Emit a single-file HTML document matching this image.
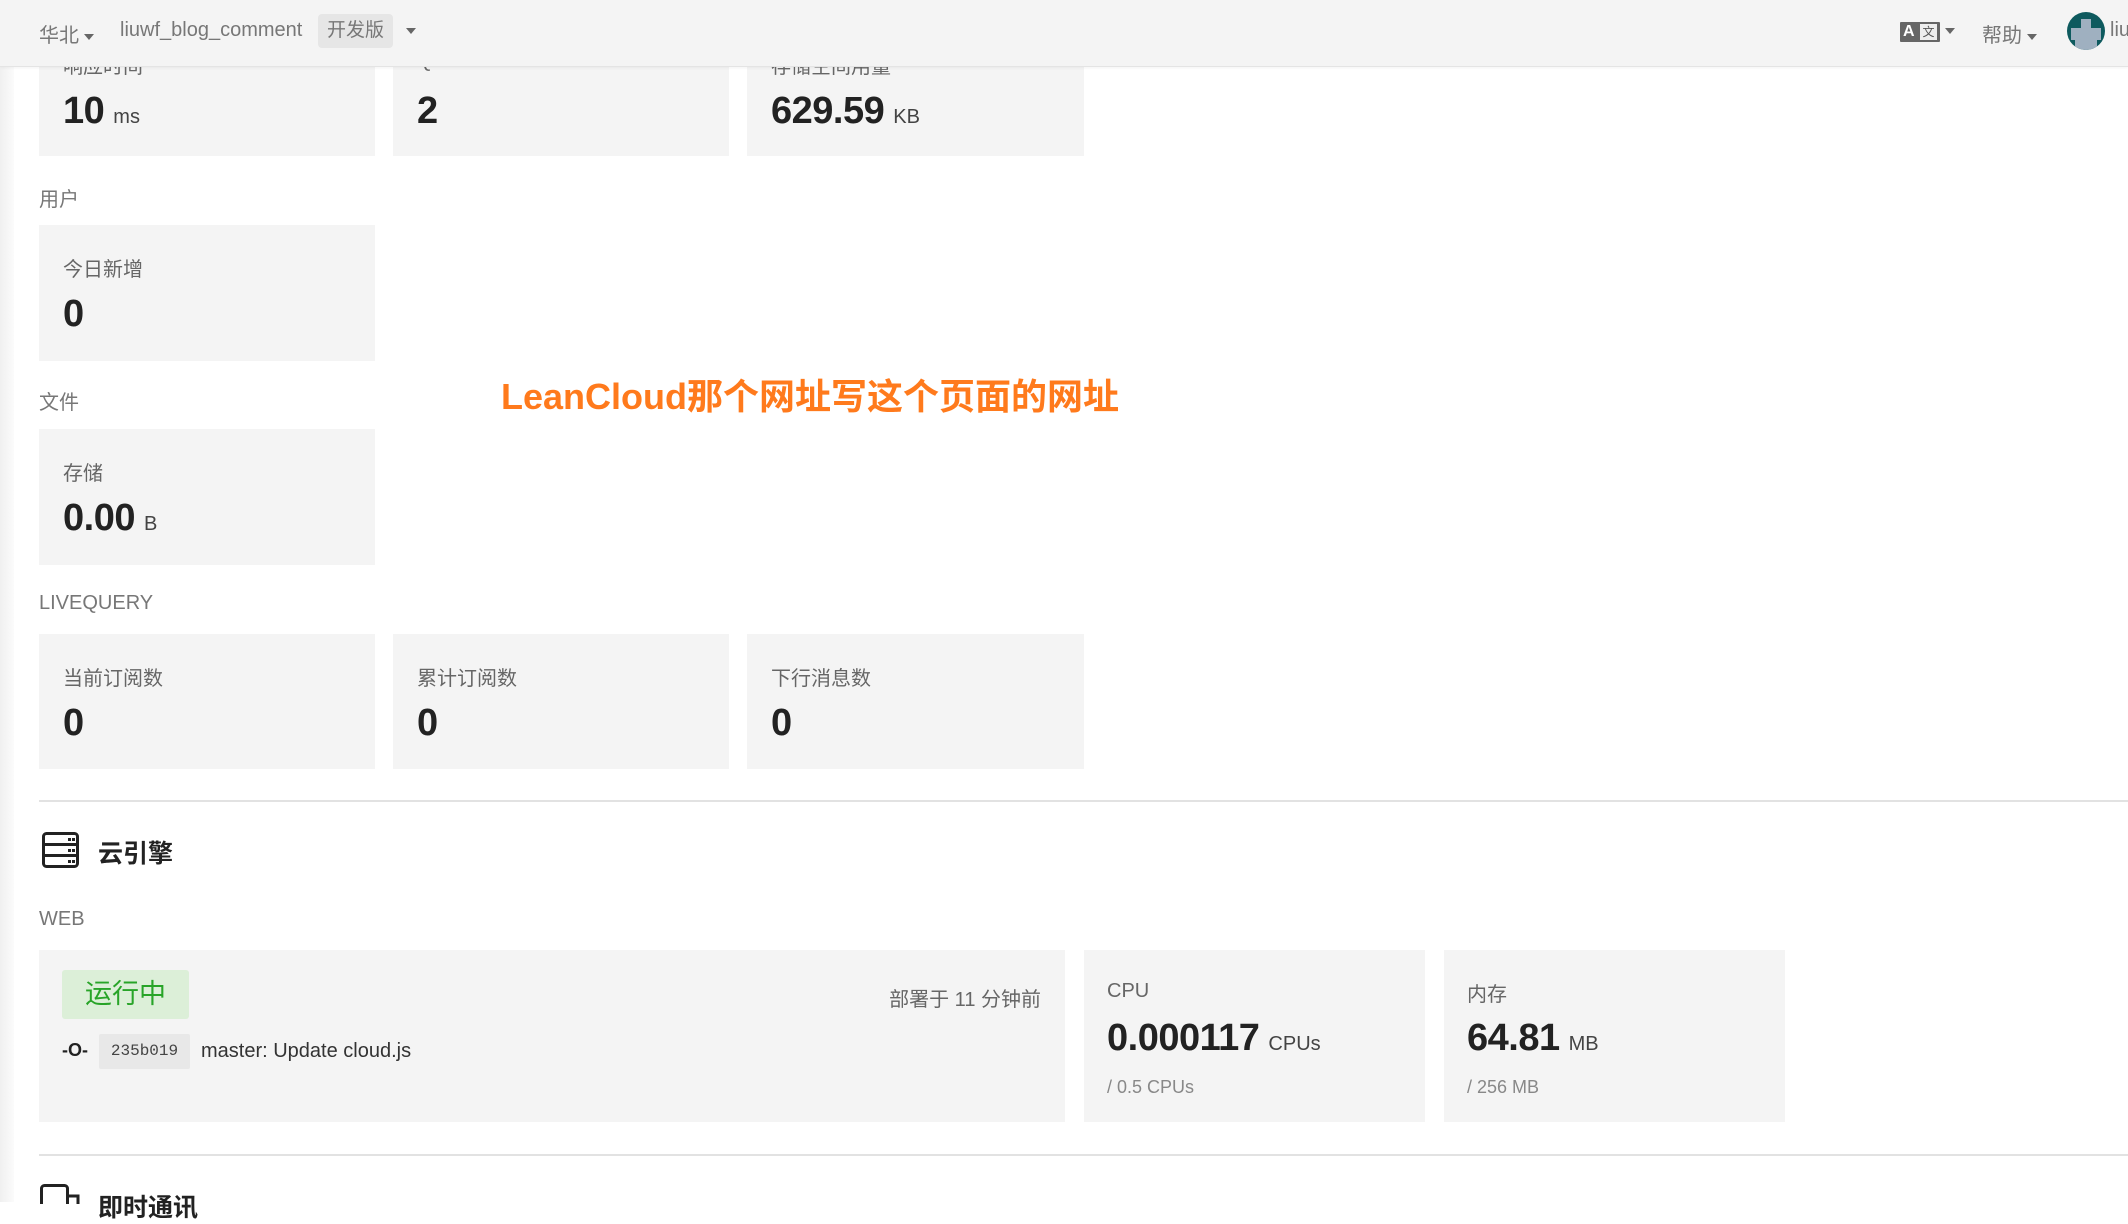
<!DOCTYPE html>
<html><head><meta charset="utf-8"><style>
*{margin:0;padding:0;box-sizing:border-box}
body{width:2128px;height:1202px;overflow:hidden;background:#fff;font-family:"Liberation Sans","Noto Sans CJK SC",sans-serif;color:#333;position:relative}
.a{position:absolute;white-space:nowrap}
.card{position:absolute;background:#f4f4f4}
.lbl{font-size:20px;color:#666}
.val{font-size:38px;font-weight:bold;color:#222;letter-spacing:-0.5px}
.unit{font-size:20px;font-weight:normal;color:#444;margin-left:9px;letter-spacing:0}
.sec{font-size:20px;color:#777}
.hr{position:absolute;left:39px;right:0;height:2px;background:#e2e2e2}
.tri{display:inline-block;width:0;height:0;border-left:5px solid transparent;border-right:5px solid transparent;border-top:6px solid #666;vertical-align:middle;margin-left:5px}
</style></head><body>
<div class="a" style="left:0;top:0;width:14px;height:1202px;background:linear-gradient(90deg,#f0f0f0,#fbfbfb)"></div>

<div class="card" style="left:39px;top:40px;width:336px;height:116px"><div class="a lbl" style="left:24px;top:10px">响应时间</div><div class="a val" style="left:24px;top:50px">10<span class="unit">ms</span></div></div>
<div class="card" style="left:393px;top:40px;width:336px;height:116px"><div class="a lbl" style="left:24px;top:10px">QPS</div><div class="a val" style="left:24px;top:50px">2</div></div>
<div class="card" style="left:747px;top:40px;width:337px;height:116px"><div class="a lbl" style="left:24px;top:10px">存储空间用量</div><div class="a val" style="left:24px;top:50px">629.59<span class="unit">KB</span></div></div>

<div class="a" style="left:0;top:0;width:2128px;height:67px;background:#f4f4f4;border-bottom:1px solid #e4e4e4;box-shadow:0 1px 3px rgba(0,0,0,.05)"></div>
<div class="a" style="left:39px;top:19px;font-size:20px;color:#777">华北<span class="tri"></span></div>
<div class="a" style="left:120px;top:19px;font-size:20px;color:#777">liuwf_blog_comment</div>
<div class="a" style="left:318px;top:14px;width:75px;height:34px;background:#e6e6e6;border-radius:4px;font-size:19px;color:#777;text-align:center;line-height:34px">开发版</div>
<div class="a" style="left:401px;top:22px"><span class="tri"></span></div>
<div class="a" style="left:1900px;top:22px;width:40px;height:20px;background:#666;border-radius:1px"><span class="a" style="left:3px;top:0;font-size:16px;font-weight:bold;color:#fff;line-height:20px">A</span><span class="a" style="left:20px;top:2px;width:17px;height:16px;background:#eee;font-size:12px;color:#555;text-align:center;line-height:16px">文</span></div>
<div class="a" style="left:1940px;top:22px"><span class="tri"></span></div>
<div class="a" style="left:1982px;top:19px;font-size:20px;color:#777">帮助<span class="tri"></span></div>
<div class="a" style="left:2067px;top:12px;width:38px;height:38px;border-radius:50%;background:#0e5a5e;overflow:hidden"><div class="a" style="left:4px;top:16px;width:30px;height:12px;background:#9fb0c0"></div><div class="a" style="left:14px;top:7px;width:10px;height:9px;background:#9fb0c0"></div><div class="a" style="left:8px;top:28px;width:22px;height:10px;background:#9fb0c0"></div></div>
<div class="a" style="left:2110px;top:19px;font-size:20px;color:#777">liu</div>

<div class="a sec" style="left:39px;top:183px">用户</div>
<div class="card" style="left:39px;top:225px;width:336px;height:136px"><div class="a lbl" style="left:24px;top:28px">今日新增</div><div class="a val" style="left:24px;top:68px">0</div></div>
<div class="a sec" style="left:39px;top:386px">文件</div>
<div class="card" style="left:39px;top:429px;width:336px;height:136px"><div class="a lbl" style="left:24px;top:28px">存储</div><div class="a val" style="left:24px;top:68px">0.00<span class="unit">B</span></div></div>

<div class="a" style="left:501px;top:368px;font-size:36px;font-weight:bold;color:#ff7a1c">LeanCloud那个网址写这个页面的网址</div>

<div class="a sec" style="left:39px;top:592px">LIVEQUERY</div>
<div class="card" style="left:39px;top:634px;width:336px;height:135px"><div class="a lbl" style="left:24px;top:28px">当前订阅数</div><div class="a val" style="left:24px;top:68px">0</div></div>
<div class="card" style="left:393px;top:634px;width:336px;height:135px"><div class="a lbl" style="left:24px;top:28px">累计订阅数</div><div class="a val" style="left:24px;top:68px">0</div></div>
<div class="card" style="left:747px;top:634px;width:337px;height:135px"><div class="a lbl" style="left:24px;top:28px">下行消息数</div><div class="a val" style="left:24px;top:68px">0</div></div>

<div class="hr" style="top:800px"></div>
<svg class="a" style="left:42px;top:832px" width="37" height="36" viewBox="0 0 37 36"><rect x="1.5" y="1.5" width="34" height="33" rx="3" fill="none" stroke="#222" stroke-width="3"/><line x1="1" y1="12.5" x2="36" y2="12.5" stroke="#222" stroke-width="3"/><line x1="1" y1="23.5" x2="36" y2="23.5" stroke="#222" stroke-width="3"/><g fill="#222"><rect x="26" y="6" width="3" height="3"/><rect x="30" y="6" width="3" height="3"/><rect x="26" y="17" width="3" height="3"/><rect x="30" y="17" width="3" height="3"/><rect x="26" y="28" width="3" height="3"/><rect x="30" y="28" width="3" height="3"/></g></svg>
<div class="a" style="left:98px;top:834px;font-size:25px;font-weight:bold;color:#222">云引擎</div>

<div class="a sec" style="left:39px;top:908px">WEB</div>
<div class="card" style="left:39px;top:950px;width:1026px;height:172px">
  <div class="a" style="left:23px;top:20px;width:127px;height:49px;background:#dcefd8;border-radius:3px;color:#28a428;font-size:27px;text-align:center;line-height:49px">运行中</div>
  <div class="a" style="right:24px;top:33px;font-size:20px;color:#666">部署于 11 分钟前</div>
  <div class="a" style="left:23px;top:90px;font-size:18px;color:#222;font-weight:bold">-O-</div>
  <div class="a" style="left:60px;top:84px;width:91px;height:35px;background:#e8e8e8;border-radius:2px;font-family:'Liberation Mono',monospace;font-size:16px;color:#444;text-align:center;line-height:35px">235b019</div>
  <div class="a" style="left:162px;top:90px;font-size:20px;color:#333">master: Update cloud.js</div>
</div>
<div class="card" style="left:1084px;top:950px;width:341px;height:172px">
  <div class="a lbl" style="left:23px;top:30px">CPU</div>
  <div class="a val" style="left:23px;top:67px">0.000117<span class="unit">CPUs</span></div>
  <div class="a" style="left:23px;top:127px;font-size:18px;color:#888">/ 0.5 CPUs</div>
</div>
<div class="card" style="left:1444px;top:950px;width:341px;height:172px">
  <div class="a lbl" style="left:23px;top:28px">内存</div>
  <div class="a val" style="left:23px;top:67px">64.81<span class="unit">MB</span></div>
  <div class="a" style="left:23px;top:127px;font-size:18px;color:#888">/ 256 MB</div>
</div>

<div class="hr" style="top:1154px"></div>
<svg class="a" style="left:40px;top:1184px" width="42" height="20" viewBox="0 0 42 20"><rect x="1.5" y="1.5" width="26" height="30" rx="3" fill="none" stroke="#222" stroke-width="3"/><path d="M28 12h10v20" fill="none" stroke="#222" stroke-width="3"/></svg>
<div class="a" style="left:98px;top:1188px;font-size:25px;font-weight:bold;color:#222">即时通讯</div>
</body></html>
